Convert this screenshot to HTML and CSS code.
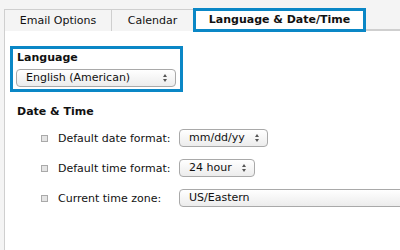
FILE: index.html
```html
<!DOCTYPE html>
<html lang="en">
<head>
  <meta charset="UTF-8" />
  <title>Preferences</title>
  <link rel="stylesheet" href="styles.css">
</head>
<body>
  <div class="tabs">
    <div class="tab tab-email">Email Options</div>
    <div class="tab tab-calendar">Calendar</div>
    <div class="tab tab-active">Language &amp; Date/Time</div>
    <div class="tab-fill"></div>
  </div>

  <div class="panel">
    <div class="lang-box">
      <div class="section-title">Language</div>
      <div class="select select-lang">English (American)<span class="arrows"></span></div>
    </div>

    <div class="section-title dt-title">Date &amp; Time</div>
    <ul class="opts">
      <li>
        <span class="bullet"></span>
        <span class="label">Default date format:</span>
        <div class="select select-date">mm/dd/yy<span class="arrows"></span></div>
      </li>
      <li>
        <span class="bullet"></span>
        <span class="label">Default time format:</span>
        <div class="select select-time">24 hour<span class="arrows"></span></div>
      </li>
      <li>
        <span class="bullet"></span>
        <span class="label">Current time zone:</span>
        <div class="select select-zone">US/Eastern<span class="arrows"></span></div>
      </li>
    </ul>
  </div>
</body>
</html>
```

FILE: styles.css
```css
body {
  margin: 0;
  background: #f4f4f4;
  font-family: "DejaVu Sans", Verdana, sans-serif;
  font-size: 11px;
  color: #111;
  overflow: hidden;
}
.tabs {
  display: flex;
  align-items: flex-start;
  padding-top: 8px;
  padding-left: 4px;
  height: 22px;
}
.tab {
  box-sizing: border-box;
  margin-top: 1px;
  height: 22px;
  border-top: 1px solid #cfcfcf;
  border-left: 1px solid #cfcfcf;
  text-align: center;
  line-height: 21px;
  background: #f4f4f4;
  flex-shrink: 0;
}
.tab-email { width: 107px; }
.tab-calendar { width: 82px; }
.tab-active {
  position: relative;
  z-index: 1;
  margin-top: 0;
  width: 173px;
  height: 24px;
  border: 3px solid #0a87c6;
  background: #fff;
  font-weight: bold;
  line-height: 17px;
}
.tab-fill {
  flex: 1;
  height: 22px;
  border-bottom: 1px solid #cfcfcf;
  box-sizing: border-box;
}
.panel {
  background: #fff;
  margin-left: 4px;
  border-left: 1px solid #cfcfcf;
  border-top: 1px solid #cfcfcf;
  height: 230px;
  padding: 15px 0 0 5px;
  box-sizing: border-box;
}
.lang-box {
  width: 173px;
  box-sizing: border-box;
  border: 3px solid #0a87c6;
  padding: 1px 3px 2px 3px;
}
.section-title {
  font-weight: bold;
  line-height: 16px;
  padding-left: 1px;
}
.select {
  position: relative;
  flex-shrink: 0;
  box-sizing: border-box;
  height: 18px;
  line-height: 16px;
  border: 1px solid #a9a9a9;
  border-radius: 4px;
  background: linear-gradient(#ffffff, #ececec);
  padding-left: 9px;
}
.arrows {
  position: absolute;
  right: 7px;
  top: 4px;
  width: 5px;
  height: 8px;
}
.arrows::before, .arrows::after {
  content: "";
  position: absolute;
  left: 0;
  border-left: 2.5px solid transparent;
  border-right: 2.5px solid transparent;
}
.arrows::before {
  top: 0;
  border-bottom: 3px solid #555;
}
.arrows::after {
  bottom: 0;
  border-top: 3px solid #555;
}
.select-lang {
  width: 160px;
  margin-top: 3px;
}
.dt-title {
  margin-top: 12px;
  padding-left: 7px;
}
.opts {
  list-style: none;
  margin: 3px 0 0 0;
  padding: 0;
}
.opts li {
  display: flex;
  align-items: center;
  height: 30px;
}
.bullet {
  flex-shrink: 0;
  width: 5px;
  height: 5px;
  margin-left: 31px;
  border: 1px solid #aaa;
  background: #e4e4e4;
}
.label {
  flex-shrink: 0;
  width: 121px;
  margin-left: 10px;
}
.select-date { width: 89px; }
.select-time { width: 76px; }
.select-zone { width: 240px; }
```
